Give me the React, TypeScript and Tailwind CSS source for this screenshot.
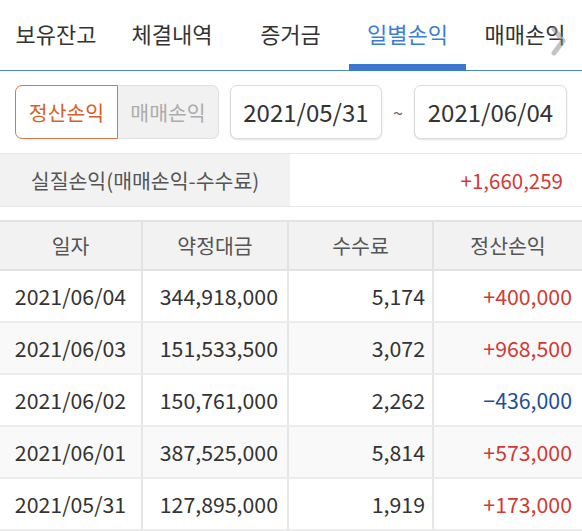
import { ReactNode } from "react";

const tabs = [
  { label: "보유잔고", w: "w-[112px]" },
  { label: "체결내역", w: "w-[120px]" },
  { label: "증거금", w: "w-[117px]" },
  { label: "일별손익", w: "w-[117px]", active: true },
  { label: "매매손익", w: "w-[118px]" },
];

const rows = [
  { date: "2021/06/04", amount: "344,918,000", fee: "5,174", pnl: "+400,000" },
  { date: "2021/06/03", amount: "151,533,500", fee: "3,072", pnl: "+968,500" },
  { date: "2021/06/02", amount: "150,761,000", fee: "2,262", pnl: "-436,000" },
  { date: "2021/06/01", amount: "387,525,000", fee: "5,814", pnl: "+573,000" },
  { date: "2021/05/31", amount: "127,895,000", fee: "1,919", pnl: "+173,000" },
];

function DateBox({ children, className }: { children: ReactNode; className: string }) {
  return (
    <div
      className={`${className} h-[54px] rounded-[7px] border border-[#dcdcdc] bg-white shadow-[0_1px_2px_rgba(0,0,0,0.12)] flex items-center justify-center text-[24px] text-[#333]`}
    >
      {children}
    </div>
  );
}

export default function App() {
  return (
    <div className="w-[582px] h-[531px] overflow-hidden bg-white font-['Noto_Sans_CJK_KR','Noto_Sans',sans-serif]">
      {/* tabs */}
      <div className="relative flex h-[71px] border-b-[1.5px] border-[#4a86d8]">
        {tabs.map((t) => (
          <div
            key={t.label}
            className={`${t.w} shrink-0 relative flex items-center justify-center pb-[4px] text-[22px] ${
              t.active ? "text-[#3b7dd8]" : "text-[#333]"
            }`}
          >
            {t.label}
            {t.active && <div className="absolute left-0 right-0 bottom-[-1px] h-[7px] bg-[#3a78d0]" />}
          </div>
        ))}
        <svg
          className="absolute left-[551px] top-[26px] opacity-50 blur-[0.6px]"
          width="16"
          height="30"
          viewBox="0 0 16 30"
        >
          <path d="M3 3 L12 15 L3 27" fill="none" stroke="#8a8a8a" strokeWidth="5" strokeLinecap="round" strokeLinejoin="round" />
        </svg>
      </div>

      {/* filter row */}
      <div className="flex items-center h-[82px] pl-[15px]">
        <div className="flex w-[204px] h-[54px]">
          <div className="w-[103px] rounded-l-[7px] border-[1.5px] border-[#dd7448] flex items-center justify-center text-[20.5px] text-[#d8602a]">
            정산손익
          </div>
          <div className="w-[101px] rounded-r-[7px] border border-l-0 border-[#e2e2e2] bg-[#f1f1f1] flex items-center justify-center text-[20.5px] text-[#acacac]">
            매매손익
          </div>
        </div>
        <DateBox className="ml-[11px] w-[152px]">2021/05/31</DateBox>
        <div className="w-[32px] text-center text-[18px] text-[#666]">~</div>
        <DateBox className="w-[153px]">2021/06/04</DateBox>
      </div>

      {/* summary */}
      <div className="flex h-[54px] border-t border-b border-[#e6e6e6]">
        <div className="w-[290px] bg-[#f2f2f2] flex items-center justify-center text-[20.5px] text-[#555]">
          실질손익(매매손익-수수료)
        </div>
        <div className="flex-1 flex items-center justify-end pr-[19px] text-[20.5px] text-[#d23a33]">
          +1,660,259
        </div>
      </div>

      {/* table */}
      <div className="mt-[13px] border-t-2 border-[#e2e2e2]">
        <div className="grid grid-cols-[143px_146px_145px_148px] h-[49px] bg-[#f2f2f2] border-b-2 border-[#e2e2e2] text-[20.5px] text-[#555]">
          {["일자", "약정대금", "수수료", "정산손익"].map((h, i) => (
            <div
              key={h}
              className={`flex items-center justify-center ${i < 3 ? "border-r-2 border-[#e2e2e2]" : ""}`}
            >
              {h}
            </div>
          ))}
        </div>
        {rows.map((r, idx) => (
          <div
            key={r.date}
            className={`grid grid-cols-[143px_146px_145px_148px] h-[52px] border-b-2 border-[#ececec] text-[21.3px] text-[#333] ${
              idx % 2 === 1 ? "bg-[#f9f9f9]" : "bg-white"
            }`}
          >
            <div className="flex items-center justify-center border-r-2 border-[#e6e6e6]">{r.date}</div>
            <div className="flex items-center justify-end pr-[9px] border-r-2 border-[#e6e6e6]">{r.amount}</div>
            <div className="flex items-center justify-end pr-[7px] border-r-2 border-[#e6e6e6]">{r.fee}</div>
            <div
              className={`flex items-center justify-end pr-[10px] ${
                r.pnl.startsWith("-") ? "text-[#1f4e9c]" : "text-[#d23a33]"
              }`}
            >
              {r.pnl.startsWith("-") ? "−" + r.pnl.slice(1) : r.pnl}
            </div>
          </div>
        ))}
      </div>
    </div>
  );
}
